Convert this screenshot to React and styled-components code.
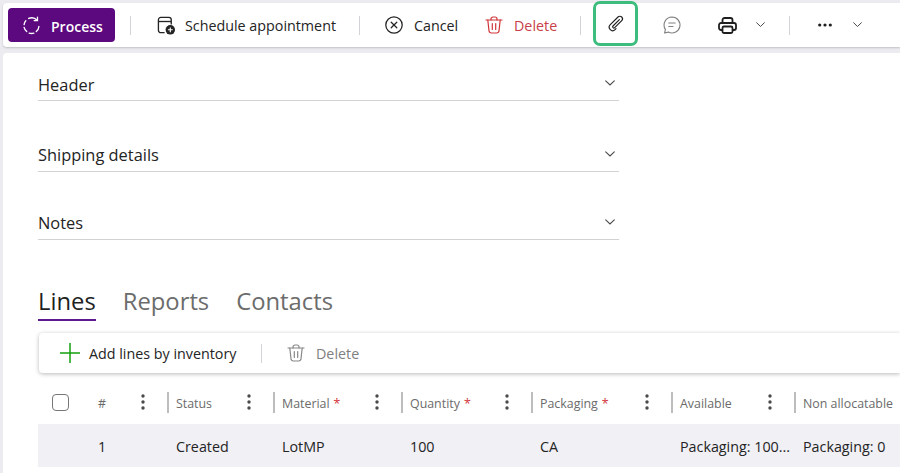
import React from "react";
import styled, { createGlobalStyle } from "styled-components";

const GlobalStyle = createGlobalStyle`
  html, body {
    margin: 0;
    width: 900px;
    height: 473px;
    overflow: hidden;
    background: #ecebf0;
    font-family: "Open Sans", "Noto Sans", sans-serif;
    color: #1f1f1f;
  }
  * { box-sizing: border-box; }
`;

const Page = styled.div`
  width: 900px;
  height: 473px;
  padding: 3px 0 0 3px;
  display: flex;
  flex-direction: column;
  gap: 6px;
  overflow: hidden;
`;

const Toolbar = styled.div`
  height: 44px;
  flex: none;
  background: #fff;
  border-radius: 4px 0 0 4px;
  box-shadow: 0 1px 2px rgba(0, 0, 0, 0.18);
  display: flex;
  align-items: center;
  padding-left: 5px;
`;

const ProcessButton = styled.div`
  width: 107px;
  height: 34px;
  border-radius: 4px;
  background: #5c087e;
  color: #fff;
  font-size: 14px;
  font-weight: 600;
  display: flex;
  align-items: center;
  gap: 10px;
  padding-left: 14px;
`;

const Separator = styled.div`
  width: 1px;
  height: 19px;
  background: #d4d4d8;
  margin: 0 ${(p) => p.$right || 0}px 0 ${(p) => p.$left || 0}px;
  flex: none;
`;

const ToolButton = styled.div`
  width: ${(p) => p.$w}px;
  padding-left: ${(p) => p.$pad}px;
  display: flex;
  align-items: center;
  gap: ${(p) => p.$gap || 11}px;
  font-size: 14.3px;
  line-height: 20px;
  color: ${(p) => p.$color || "#242424"};
  flex: none;
  white-space: nowrap;
`;

const Label = styled.span`
  padding-top: 2px;
  color: ${(p) => p.$color || "inherit"};
`;

const IconButton = styled.div`
  width: ${(p) => p.$w}px;
  height: 44px;
  display: flex;
  align-items: center;
  padding-left: ${(p) => p.$pad}px;
  gap: ${(p) => p.$gap || 0}px;
  flex: none;
`;

const HighlightBox = styled.div`
  width: 45px;
  height: 45px;
  margin-top: -3px;
  padding-top: 1px;
  border: 3px solid #3dbd7d;
  border-radius: 7px;
  background: #fff;
  display: flex;
  align-items: center;
  justify-content: center;
  flex: none;
`;

const Card = styled.div`
  flex: 1;
  background: #fff;
  border-radius: 4px 0 0 0;
  padding: 0 0 0 35px;
  display: flex;
  flex-direction: column;
  min-height: 0;
`;

const AccordionRow = styled.div`
  width: 581px;
  height: ${(p) => p.$h}px;
  border-bottom: 1px solid #d2d2d2;
  margin-top: ${(p) => p.$top}px;
  display: flex;
  align-items: flex-end;
  justify-content: space-between;
  font-size: 16.4px;
  line-height: 22px;
  color: #242424;
  padding: 0 4px ${(p) => p.$pb}px 0;
  flex: none;
`;

const AccordionChevron = styled.span`
  display: flex;
  padding-bottom: ${(p) => 14 - p.$pb}px;
`;

const TabBar = styled.div`
  margin-top: 43px;
  height: 38px;
  display: flex;
  gap: 27px;
  flex: none;
`;

const Tab = styled.div`
  height: 38px;
  font-size: 23.8px;
  line-height: 36px;
  color: ${(p) => (p.$active ? "#1f1f1f" : "#6c6c6c")};
  border-bottom: 2px solid ${(p) => (p.$active ? "#5c1a8e" : "transparent")};
`;

const SubToolbar = styled.div`
  margin: 12px 0 0 1px;
  height: 40px;
  border-radius: 4px 0 0 4px;
  background: #fff;
  box-shadow: 0 1px 4px rgba(0, 0, 0, 0.28);
  display: flex;
  align-items: center;
  padding-left: 21px;
  flex: none;
`;

const COLUMNS = "52px 77px 106px 128px 130px 140px 123px 106px";

const HeadRow = styled.div`
  margin-top: 7px;
  height: 44px;
  display: grid;
  grid-template-columns: ${COLUMNS};
  align-items: center;
  flex: none;
`;

const HeadCell = styled.div`
  height: 21px;
  display: flex;
  align-items: center;
  justify-content: space-between;
  padding-left: ${(p) => (p.$divider ? 7 : 8)}px;
  padding-right: 22px;
  font-size: 12.4px;
  color: #6b6b6b;
  white-space: nowrap;
  border-left: ${(p) => (p.$divider ? "2px solid #bdbdbd" : "none")};
`;

const Required = styled.span`
  color: #d13438;
  margin-left: 4px;
`;

const CheckBox = styled.div`
  width: 17px;
  height: 17px;
  margin-left: 14px;
  border: 1px solid #777;
  border-radius: 4px;
`;

const DataRow = styled.div`
  height: 43px;
  background: #f0f0f5;
  display: grid;
  grid-template-columns: ${COLUMNS};
  align-items: center;
  font-size: 14.3px;
  color: #242424;
  flex: none;
`;

const DataCell = styled.div`
  padding: 2px 0 0 ${(p) => (p.$divider ? 9 : 8)}px;
  white-space: nowrap;
`;

const ProcessIcon = () => (
  <svg width="19" height="19" viewBox="0 0 20 20" fill="none" stroke="#fff" strokeWidth="1.4" strokeLinecap="round">
    <path d="M4 5 A8 8 0 0 0 2.2 9" />
    <path d="M2.2 12 A8 8 0 0 0 5 16.4" />
    <path d="M7.5 18 A8 8 0 0 0 12.5 18" />
    <path d="M15 16.4 A8 8 0 0 0 17.8 11" />
    <path d="M7 2.6 A8 8 0 0 1 16 4.5" />
    <path d="M16.3 1.3 V4.8 H12.8" />
  </svg>
);

const ScheduleIcon = () => (
  <svg width="19" height="19" viewBox="0 0 20 20" fill="none">
    <path d="M8 17.5 H4 A2.5 2.5 0 0 1 1.5 15 V4 A2.5 2.5 0 0 1 4 1.5 H12.5 A2.5 2.5 0 0 1 15 4 V9" stroke="#242424" strokeWidth="1.4" />
    <path d="M1.5 5.8 H15" stroke="#242424" strokeWidth="1.4" />
    <circle cx="14" cy="14.5" r="5" fill="#242424" />
    <path d="M14 12 V17 M11.5 14.5 H16.5" stroke="#fff" strokeWidth="1.2" />
  </svg>
);

const CancelIcon = () => (
  <svg width="18" height="18" viewBox="0 0 18 18" fill="none" stroke="#242424" strokeWidth="1.25" strokeLinecap="round">
    <circle cx="9" cy="9" r="8.2" />
    <path d="M6.2 6.2 L11.8 11.8 M11.8 6.2 L6.2 11.8" />
  </svg>
);

const TrashIcon = ({ color }) => (
  <svg width="18" height="18" viewBox="0 0 18 18" fill="none" stroke={color} strokeWidth="1.2" strokeLinecap="round">
    <path d="M1 4 H17" />
    <path d="M6 4 V3 A2 2 0 0 1 8 1 H10 A2 2 0 0 1 12 3 V4" />
    <path d="M2.8 4 L4 14.8 A2.4 2.4 0 0 0 6.4 17 H11.6 A2.4 2.4 0 0 0 14 14.8 L15.2 4" />
    <path d="M7.3 7.5 V13.5 M10.7 7.5 V13.5" />
  </svg>
);

const ClipIcon = () => (
  <svg width="18" height="18" viewBox="0 0 18 18" fill="none" stroke="#1f1f1f" strokeWidth="1.15" strokeLinecap="round">
    <path d="M12.4 4.6 L6 11 A1.2 1.2 0 0 0 7.7 12.7 L14.7 5.7 A2.6 2.6 0 0 0 11 2 L3.3 9.7 A3.4 3.4 0 0 0 8.1 14.6 L9 13.7" />
  </svg>
);

const CommentIcon = () => (
  <svg width="20" height="20" viewBox="0 0 20 20" fill="none" stroke="#808080" strokeWidth="1.15">
    <path d="M10 2 A8 8 0 1 1 6.3 17.1 L2.6 18 L3.4 14.4 A8 8 0 0 1 10 2 Z" strokeLinejoin="round" />
    <path d="M6.8 8 H13.2 M6.8 11.5 H11" strokeLinecap="round" />
  </svg>
);

const PrinterIcon = () => (
  <svg width="19" height="17" viewBox="0 0 19 17" fill="none" stroke="#1f1f1f" strokeWidth="1.8">
    <path d="M4.5 6 V3 A2 2 0 0 1 6.5 1 H12.5 A2 2 0 0 1 14.5 3 V6" />
    <path d="M4.5 13 H3 A2 2 0 0 1 1 11 V8 A2 2 0 0 1 3 6 H16 A2 2 0 0 1 18 8 V11 A2 2 0 0 1 16 13 H14.5" />
    <rect x="4.5" y="9.5" width="10" height="6.5" rx="1.5" />
  </svg>
);

const Chevron = ({ width = 9 }) => (
  <svg width={width} height={width * 0.6} viewBox="0 0 10 6" fill="none" stroke="#4a4a4a" strokeWidth="1.1" strokeLinecap="round">
    <path d="M0.7 0.8 L5 5 L9.3 0.8" />
  </svg>
);

const MoreIcon = () => (
  <svg width="14" height="4" viewBox="0 0 14 4" fill="#1f1f1f">
    <circle cx="1.7" cy="2" r="1.6" />
    <circle cx="7" cy="2" r="1.6" />
    <circle cx="12.3" cy="2" r="1.6" />
  </svg>
);

const ColumnDots = () => (
  <svg width="4" height="16" viewBox="0 0 4 16" fill="#4a4a4a">
    <circle cx="2" cy="2" r="1.7" />
    <circle cx="2" cy="8" r="1.7" />
    <circle cx="2" cy="14" r="1.7" />
  </svg>
);

const PlusIcon = () => (
  <svg width="20" height="20" viewBox="0 0 20 20" stroke="#13a10e" strokeWidth="1.5">
    <path d="M10 0 V20 M0 10 H20" />
  </svg>
);

const HEADERS = [
  { label: "Status" },
  { label: "Material", required: true },
  { label: "Quantity", required: true },
  { label: "Packaging", required: true },
  { label: "Available" },
  { label: "Non allocatable", last: true },
];

const SECTIONS = [
  { title: "Header", h: 48, top: 0, pb: 4 },
  { title: "Shipping details", h: 47, top: 24, pb: 5 },
  { title: "Notes", h: 47, top: 21, pb: 5 },
];

const App = () => (
  <>
    <GlobalStyle />
    <Page>
      <Toolbar>
        <ProcessButton>
          <ProcessIcon />
          <Label>Process</Label>
        </ProcessButton>
        <Separator $left={15} />
        <ToolButton $w={228} $pad={26} $gap={9}>
          <ScheduleIcon />
          <Label>Schedule appointment</Label>
        </ToolButton>
        <Separator />
        <ToolButton $w={111} $pad={25}>
          <CancelIcon />
          <Label>Cancel</Label>
        </ToolButton>
        <ToolButton $w={109} $pad={14} $color="#c8404a">
          <TrashIcon color="#d13438" />
          <Label>Delete</Label>
        </ToolButton>
        <Separator $right={12} />
        <HighlightBox>
          <ClipIcon />
        </HighlightBox>
        <IconButton $w={80} $pad={24}>
          <CommentIcon />
        </IconButton>
        <IconButton $w={71} $pad={0} $gap={19}>
          <PrinterIcon />
          <Chevron />
        </IconButton>
        <Separator />
        <IconButton $w={90} $pad={28} $gap={21}>
          <MoreIcon />
          <Chevron />
        </IconButton>
      </Toolbar>
      <Card>
        {SECTIONS.map((s) => (
          <AccordionRow key={s.title} $h={s.h} $top={s.top} $pb={s.pb}>
            {s.title}
            <AccordionChevron $pb={s.pb}>
              <Chevron width={10} />
            </AccordionChevron>
          </AccordionRow>
        ))}
        <TabBar>
          <Tab $active>Lines</Tab>
          <Tab>Reports</Tab>
          <Tab>Contacts</Tab>
        </TabBar>
        <SubToolbar>
          <ToolButton $w={201} $pad={0} $gap={9}>
            <PlusIcon />
            <Label>Add lines by inventory</Label>
          </ToolButton>
          <Separator />
          <ToolButton $w={100} $pad={25}>
            <TrashIcon color="#888" />
            <Label $color="#808080">Delete</Label>
          </ToolButton>
        </SubToolbar>
        <HeadRow>
          <CheckBox />
          <HeadCell>
            <Label>#</Label>
            <ColumnDots />
          </HeadCell>
          {HEADERS.map((h) => (
            <HeadCell $divider key={h.label}>
              <Label>
                {h.label}
                {h.required && <Required>*</Required>}
              </Label>
              {!h.last && <ColumnDots />}
            </HeadCell>
          ))}
        </HeadRow>
        <DataRow>
          <div />
          <DataCell>1</DataCell>
          <DataCell $divider>Created</DataCell>
          <DataCell $divider>LotMP</DataCell>
          <DataCell $divider>100</DataCell>
          <DataCell $divider>CA</DataCell>
          <DataCell $divider>Packaging: 100...</DataCell>
          <DataCell $divider>Packaging: 0</DataCell>
        </DataRow>
      </Card>
    </Page>
  </>
);

export default App;
